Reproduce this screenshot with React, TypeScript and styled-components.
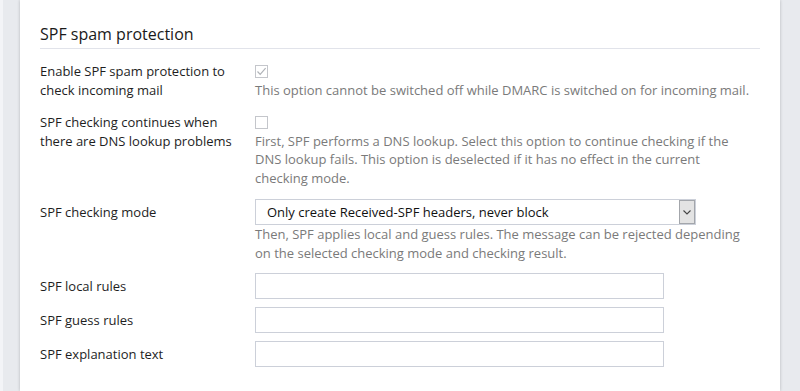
import styled, { createGlobalStyle } from 'styled-components';

const GlobalStyle = createGlobalStyle`
    html, body {
        margin: 0;
        padding: 0;
        background: #eceff4;
        font-family: "Open Sans", "Noto Sans", Arial, sans-serif;
    }
`

const Page = styled.div`
    min-height: 391px;
    padding: 0 20px;
    box-sizing: border-box;
    background: linear-gradient(to right, #f3f4f7 0, #f3f4f7 3px, #e8eaee 3px, #e8eaee 100%);
    display: flex;
`
const Card = styled.div`
    flex: 1;
    background: #fff;
    box-shadow: 0 0 3px rgba(0, 0, 0, 0.22);
    padding: 20px 20px 0 20px;
    min-height: 391px;
    box-sizing: border-box;
`
const Title = styled.h2`
    margin: 0;
    padding: 3px 0 3px 0;
    font-size: 16px;
    font-weight: 400;
    line-height: 22px;
    color: #1a1a1a;
    border-bottom: 1px solid #e1e3ea;
`
const Form = styled.div`
    display: grid;
    grid-template-columns: 215px 1fr;
    row-gap: 13px;
    margin-top: 13px;
    font-size: 13px;
    line-height: 18.5px;
    color: #1e1e1e;
`
type RowProps = {
    $gap?: number
}
const Label = styled.div<RowProps>`
    padding-right: 10px;
    margin-top: ${({$gap}) => $gap ?? 0}px;
`
const LabelMid = styled(Label)`
    display: flex;
    align-items: center;
    height: 26px;
`
const Control = styled.div<RowProps>`
    display: flex;
    flex-direction: column;
    margin-top: ${({$gap}) => $gap ?? 0}px;
`
const CheckLine = styled.div`
    height: 18.5px;
    display: flex;
    align-items: center;
`
const CheckBox = styled.span`
    width: 13px;
    height: 13px;
    box-sizing: border-box;
    border: 1px solid #c4c6cb;
    background: #fff;
    display: flex;
    align-items: center;
    justify-content: center;
    color: #b0b3b8;
`
const Help = styled.div`
    color: #7a7a7a;
    max-width: 498px;
`
const SelectBox = styled.div`
    display: flex;
    width: 441px;
    height: 26px;
    box-sizing: border-box;
    border: 1px solid #ccd0d9;
    background: #fff;
`
const SelectText = styled.div`
    flex: 1;
    padding-left: 11px;
    display: flex;
    align-items: center;
    color: #111;
    font-size: 13px;
`
const SelectArrow = styled.div`
    width: 16px;
    box-sizing: border-box;
    border: 1px solid #a3a6ab;
    background: #e3e3e3;
    display: flex;
    align-items: center;
    justify-content: center;
    color: #444;
`
const TextInput = styled.input`
    width: 409px;
    height: 26px;
    box-sizing: border-box;
    border: 1px solid #ccd0d9;
    padding: 0 8px;
    font: inherit;
    outline: none;
`

const Check = () => (
    <svg width="11" height="11" viewBox="0 0 11 11">
        <path d="M1.5 5.5 L4.2 8.3 L9.6 2.2" fill="none" stroke="currentColor" strokeWidth="1.2" />
    </svg>
)

const Chevron = () => (
    <svg width="8" height="5" viewBox="0 0 8 5">
        <path d="M0.5 0.5 L4 4 L7.5 0.5" fill="none" stroke="currentColor" strokeWidth="1.1" />
    </svg>
)

const App = () => {
    return (
        <Page>
            <GlobalStyle />
            <Card>
                <Title>SPF spam protection</Title>
                <Form>
                    <Label>Enable SPF spam protection to check incoming mail</Label>
                    <Control>
                        <CheckLine>
                            <CheckBox><Check /></CheckBox>
                        </CheckLine>
                        <Help>This option cannot be switched off while DMARC is switched on for incoming mail.</Help>
                    </Control>

                    <Label $gap={1}>SPF checking continues when there are DNS lookup problems</Label>
                    <Control $gap={1}>
                        <CheckLine>
                            <CheckBox />
                        </CheckLine>
                        <Help>
                            First, SPF performs a DNS lookup. Select this option to continue checking if the
                            DNS lookup fails. This option is deselected if it has no effect in the current
                            checking mode.
                        </Help>
                    </Control>

                    <LabelMid $gap={-1}>SPF checking mode</LabelMid>
                    <Control $gap={-1}>
                        <SelectBox>
                            <SelectText>Only create Received-SPF headers, never block</SelectText>
                            <SelectArrow><Chevron /></SelectArrow>
                        </SelectBox>
                        <Help>
                            Then, SPF applies local and guess rules. The message can be rejected depending
                            on the selected checking mode and checking result.
                        </Help>
                    </Control>

                    <LabelMid $gap={-2}>SPF local rules</LabelMid>
                    <Control $gap={-2}><TextInput /></Control>

                    <LabelMid $gap={-5}>SPF guess rules</LabelMid>
                    <Control $gap={-5}><TextInput /></Control>

                    <LabelMid $gap={-5}>SPF explanation text</LabelMid>
                    <Control $gap={-5}><TextInput /></Control>
                </Form>
            </Card>
        </Page>
    );
};

export default App;
